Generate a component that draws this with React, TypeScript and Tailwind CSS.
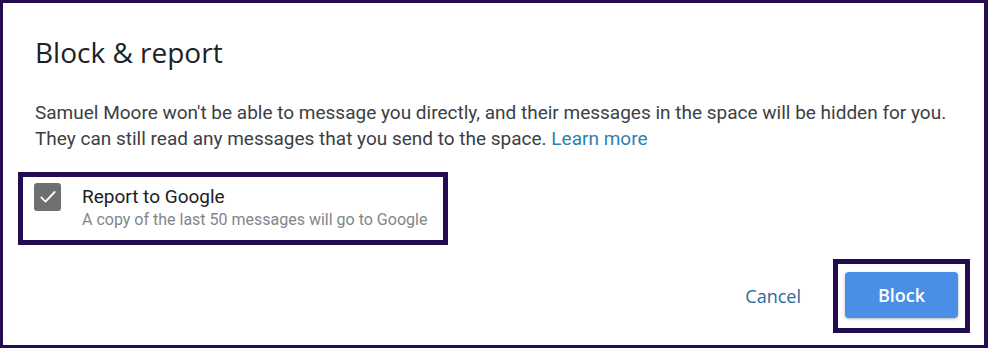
import React from 'react'

const purple = 'border-[#250b52]'
const heading = { fontFamily: '"Open Sans", Roboto, sans-serif' }

export default function App() {
  return (
    <div className="w-[988px] h-[348px] bg-[#250b52] pt-[3px] pl-[3px] pr-[4px] pb-[3px]" style={{ fontFamily: 'Roboto, "Liberation Sans", sans-serif' }}>
      <div className="h-full bg-white flex flex-col pl-[32px] pr-[14px]">
        <h1 className="mt-[31px] text-[28px] leading-[36px] text-[#202124] font-normal" style={heading}>Block &amp; report</h1>

        <p className="mt-[30px] text-[19px] leading-[26px] text-[#3c4043]">
          Samuel Moore won&apos;t be able to message you directly, and their messages in the space will be hidden for you.
          <br />
          They can still read any messages that you send to the space.{' '}
          <a className="text-[#2f7fb5]">Learn more</a>
        </p>

        {/* checkbox row, highlighted */}
        <div className={`mt-[20px] -ml-[17px] w-[430px] h-[73px] border-[5px] ${purple} flex items-start`}>
          <div className="mt-[6px] ml-[11px] w-[27px] h-[28px] rounded-[3px] bg-[#6f6f6f] flex items-center justify-center shrink-0">
            <svg width="20" height="20" viewBox="0 0 24 24" fill="none" stroke="white" strokeWidth="2.2" strokeLinecap="round" strokeLinejoin="round">
              <path d="M4 12.5l5 5L20 6" />
            </svg>
          </div>
          <div className="ml-[21px] pt-[7px] flex flex-col">
            <span className="text-[19px] leading-[25px] text-[#202124]">Report to Google</span>
            <span className="mt-[1px] text-[16px] leading-[20px] text-[#80868b]">A copy of the last 50 messages will go to Google</span>
          </div>
        </div>

        {/* actions */}
        <div className="mt-[14px] flex justify-end items-center">
          <button className="text-[18px] font-medium text-[#2c6a9c] px-[8px] py-[10px] mr-[24px]" style={heading}>Cancel</button>
          <div className={`w-[137px] h-[74px] border-[5px] ${purple} pl-[7px] pt-[8px]`}>
            <button className="w-[113px] h-[46px] rounded-[4px] bg-[#4a8fe7] text-white text-[18px] font-semibold shadow-[0_1px_3px_rgba(0,0,0,0.3)]" style={heading}>
              Block
            </button>
          </div>
        </div>
      </div>
    </div>
  )
}
